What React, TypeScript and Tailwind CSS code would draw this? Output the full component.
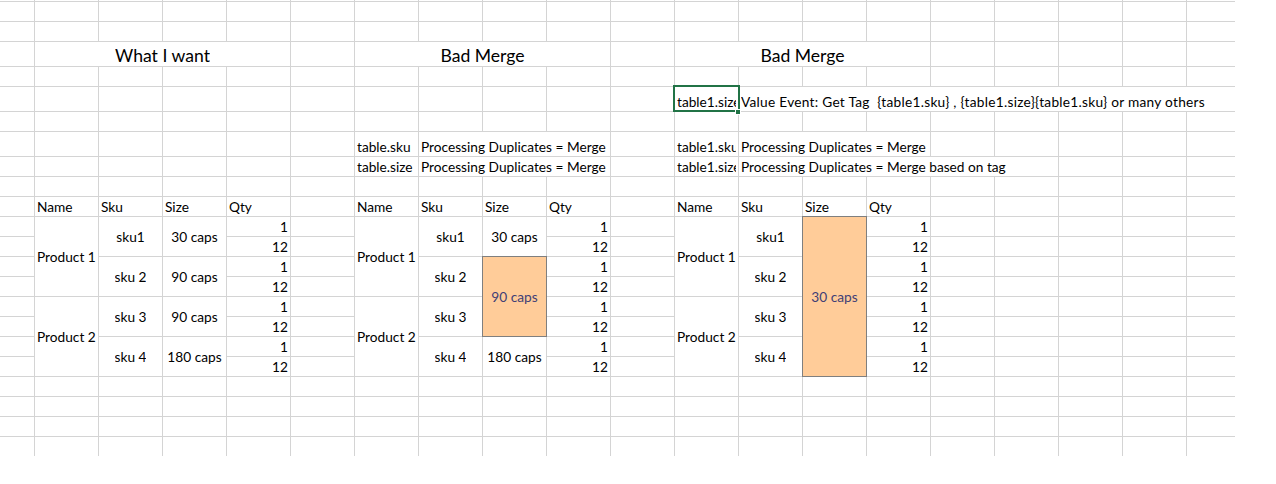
type Align = "left" | "center" | "centerLeft" | "right" | "title";

type Cell = {
  text?: string;
  cs?: number;
  rs?: number;
  align?: Align;
  input?: boolean;
  selected?: boolean;
  extra?: string;
};

const colSpan: Record<number, string> = {
  1: "",
  3: "col-span-3",
  4: "col-span-4",
  5: "col-span-5",
  8: "col-span-8",
};

const rowSpan: Record<number, string> = {
  1: "",
  2: "row-span-2",
  4: "row-span-4",
  8: "row-span-8",
};

const alignClass: Record<Align, string> = {
  left: "items-end justify-start pb-px",
  center: "items-center justify-center",
  centerLeft: "items-center justify-start",
  right: "items-end justify-end pb-px",
  title: "items-end justify-center text-[17.6px] leading-[20px]",
};

const blank = (n: number): Cell[] => Array.from({ length: n }, () => ({}));

const txt = (text: string, extra: Partial<Cell> = {}): Cell => ({ text, ...extra });

const qtyRow = (n: string) => txt(n, { align: "right" });

function buildRows(): Cell[][] {
  const rows: Cell[][] = [];

  rows.push(blank(20)); // top sliver
  rows.push(blank(20));
  rows.push(blank(20));

  rows.push([
    {},
    txt("What I want", { cs: 4, align: "title" }),
    {},
    txt("Bad Merge", { cs: 4, align: "title" }),
    {},
    txt("Bad Merge", { cs: 4, align: "title" }),
    ...blank(5),
  ]);

  rows.push(blank(20));

  rows.push([
    ...blank(11),
    txt("table1.size", { selected: true }),
    txt("Value Event: Get Tag\u00a0 {table1.sku} , {table1.size}{table1.sku} or many others", {
      cs: 8,
      extra: "tracking-[0.27px]",
    }),
  ]);

  rows.push(blank(20));

  rows.push([
    ...blank(6),
    txt("table.sku"),
    txt("Processing Duplicates = Merge", { cs: 3 }),
    {},
    txt("table1.sku"),
    txt("Processing Duplicates = Merge", { cs: 3 }),
    ...blank(5),
  ]);

  rows.push([
    ...blank(6),
    txt("table.size"),
    txt("Processing Duplicates = Merge", { cs: 3 }),
    {},
    txt("table1.size"),
    txt("Processing Duplicates = Merge based on tag", { cs: 5 }),
    ...blank(3),
  ]);

  rows.push(blank(20));

  rows.push([
    {},
    txt("Name"), txt("Sku"), txt("Size"), txt("Qty"),
    {},
    txt("Name"), txt("Sku"), txt("Size"), txt("Qty"),
    {},
    txt("Name"), txt("Sku"), txt("Size"), txt("Qty"),
    ...blank(5),
  ]);

  // data rows
  rows.push([
    {},
    txt("Product 1", { rs: 4, align: "centerLeft" }),
    txt("sku1", { rs: 2, align: "center" }),
    txt("30 caps", { rs: 2, align: "center" }),
    qtyRow("1"),
    {},
    txt("Product 1", { rs: 4, align: "centerLeft" }),
    txt("sku1", { rs: 2, align: "center" }),
    txt("30 caps", { rs: 2, align: "center" }),
    qtyRow("1"),
    {},
    txt("Product 1", { rs: 4, align: "centerLeft" }),
    txt("sku1", { rs: 2, align: "center" }),
    txt("30 caps", { rs: 8, align: "center", input: true }),
    qtyRow("1"),
    ...blank(5),
  ]);
  rows.push([{}, qtyRow("12"), {}, qtyRow("12"), {}, qtyRow("12"), ...blank(5)]);

  rows.push([
    {},
    txt("sku 2", { rs: 2, align: "center" }),
    txt("90 caps", { rs: 2, align: "center" }),
    qtyRow("1"),
    {},
    txt("sku 2", { rs: 2, align: "center" }),
    txt("90 caps", { rs: 4, align: "center", input: true }),
    qtyRow("1"),
    {},
    txt("sku 2", { rs: 2, align: "center" }),
    qtyRow("1"),
    ...blank(5),
  ]);
  rows.push([{}, qtyRow("12"), {}, qtyRow("12"), {}, qtyRow("12"), ...blank(5)]);

  rows.push([
    {},
    txt("Product 2", { rs: 4, align: "centerLeft" }),
    txt("sku 3", { rs: 2, align: "center" }),
    txt("90 caps", { rs: 2, align: "center" }),
    qtyRow("1"),
    {},
    txt("Product 2", { rs: 4, align: "centerLeft" }),
    txt("sku 3", { rs: 2, align: "center" }),
    qtyRow("1"),
    {},
    txt("Product 2", { rs: 4, align: "centerLeft" }),
    txt("sku 3", { rs: 2, align: "center" }),
    qtyRow("1"),
    ...blank(5),
  ]);
  rows.push([{}, qtyRow("12"), {}, qtyRow("12"), {}, qtyRow("12"), ...blank(5)]);

  rows.push([
    {},
    txt("sku 4", { rs: 2, align: "center" }),
    txt("180 caps", { rs: 2, align: "center" }),
    qtyRow("1"),
    {},
    txt("sku 4", { rs: 2, align: "center" }),
    txt("180 caps", { rs: 2, align: "center" }),
    qtyRow("1"),
    {},
    txt("sku 4", { rs: 2, align: "center" }),
    qtyRow("1"),
    ...blank(5),
  ]);
  rows.push([{}, qtyRow("12"), {}, qtyRow("12"), {}, qtyRow("12"), ...blank(5)]);

  for (let i = 0; i < 4; i++) rows.push(blank(20));

  return rows;
}

function SheetCell({ cell }: { cell: Cell }) {
  const align = alignClass[cell.align ?? "left"];
  return (
    <div
      className={`flex min-w-0 px-[2px] ${align} ${colSpan[cell.cs ?? 1]} ${rowSpan[cell.rs ?? 1]} ${
        cell.input
          ? "relative z-[1] bg-[#ffcc99] text-[#3f3f76] outline outline-1 outline-[#7f7f7f]"
          : "bg-white text-black"
      } ${cell.selected ? "relative" : ""} ${cell.extra ?? ""}`}
    >
      {cell.text && <span className="min-w-0 overflow-hidden whitespace-nowrap">{cell.text}</span>}
      {cell.selected && (
        <>
          <div className="pointer-events-none absolute -left-[2px] -right-[2px] -top-[2px] -bottom-[1px] z-10 border-2 border-[#217346]" />
          <div className="absolute -right-[3px] -bottom-[4px] z-20 h-[6px] w-[6px] border border-white bg-[#217346]" />
        </>
      )}
    </div>
  );
}

export default function App() {
  const rows = buildRows();
  return (
    <div className="h-[484px] w-[1276px] overflow-hidden bg-white">
      <div
        className="grid w-[1235px] grid-cols-[34px_repeat(18,63px)_48px] grid-rows-[1px_19px_19px_24px_19px_24px_19px_24px_19px_19px_19px_repeat(12,19px)] gap-px bg-[#d4d4d4] text-[13.7px] leading-[16px]"
        style={{ fontFamily: "Lato, 'Noto Sans', sans-serif" }}
      >
        {rows.flat().map((cell, i) => (
          <SheetCell key={i} cell={cell} />
        ))}
      </div>
    </div>
  );
}
